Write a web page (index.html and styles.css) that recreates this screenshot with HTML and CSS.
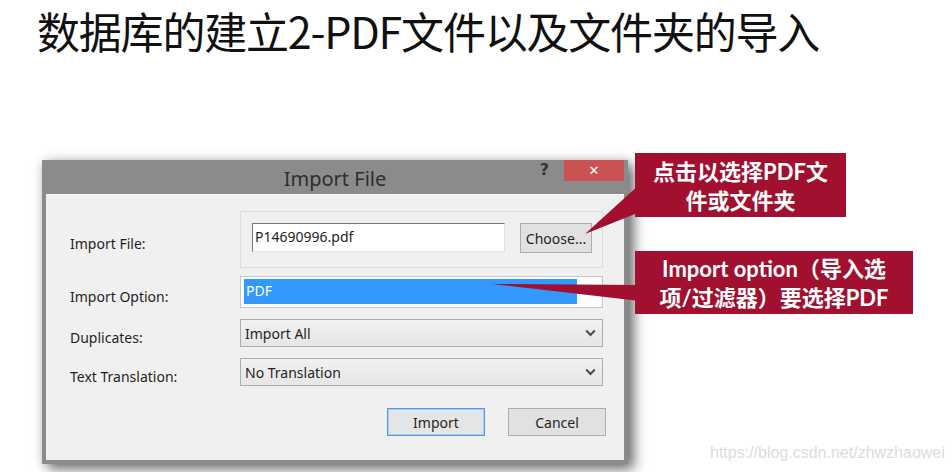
FILE: index.html
```html
<!DOCTYPE html>
<html lang="zh-CN">

<head>
    <meta charset="UTF-8">
    <title>数据库的建立2-PDF文件以及文件夹的导入</title>
    <link rel="stylesheet" href="styles.css">
</head>

<body>

    <h1 class="slide-title">数据库的建立2-PDF文件以及文件夹的导入</h1>

    <div class="stage">
        <div class="dialog">
            <div class="titlebar">
                <div class="dialog-title">Import File</div>
                <div class="window-buttons">
                    <span class="help">?</span>
                    <span class="close">&#x2715;</span>
                </div>
            </div>

            <div class="dialog-body">
                <div class="row row-file">
                    <div class="label">Import File:</div>
                    <div class="group-box">
                        <div class="text-field">P14690996.pdf</div>
                        <button class="btn btn-choose">Choose...</button>
                    </div>
                </div>

                <div class="row row-option">
                    <div class="label">Import Option:</div>
                    <div class="list-box">
                        <div class="list-item selected">PDF</div>
                    </div>
                </div>

                <div class="row row-select">
                    <div class="label">Duplicates:</div>
                    <div class="select">
                        <span>Import All</span>
                        <svg class="chevron" width="11" height="8" viewBox="0 0 11 8">
                            <path d="M1.2 1.5 L5.5 6 L9.8 1.5" fill="none" stroke="#4a4a4a" stroke-width="2"/>
                        </svg>
                    </div>
                </div>

                <div class="row row-select">
                    <div class="label">Text Translation:</div>
                    <div class="select">
                        <span>No Translation</span>
                        <svg class="chevron" width="11" height="8" viewBox="0 0 11 8">
                            <path d="M1.2 1.5 L5.5 6 L9.8 1.5" fill="none" stroke="#4a4a4a" stroke-width="2"/>
                        </svg>
                    </div>
                </div>

                <div class="actions">
                    <button class="btn btn-action default">Import</button>
                    <button class="btn btn-action">Cancel</button>
                </div>
            </div>
        </div>
    </div>

    <!-- callout pointers -->
    <svg class="pointers" width="952" height="472" viewBox="0 0 952 472">
        <polygon points="640,184 640,212 585,234" fill="#a1102f"/>
        <polygon points="492,284 640,285 640,301" fill="#a1102f"/>
    </svg>

    <div class="callout callout-choose">点击以选择PDF文<br>件或文件夹</div>
    <div class="callout callout-option">Import option（导入选<br>项/过滤器）要选择PDF</div>

    <div class="watermark">https://blog.csdn.net/zhwzhaowei</div>

</body>

</html>
```

FILE: styles.css
```css
body {
    margin: 0;
    background: #ffffff;
    position: relative;
    width: 952px;
    height: 472px;
    overflow: hidden;
    font-family: "Noto Sans", "Noto Sans CJK SC", sans-serif;
}

.slide-title {
    margin: 0;
    padding: 8px 0 0 37px;
    font-family: "Noto Sans CJK SC", sans-serif;
    font-weight: 400;
    font-size: 43px;
    line-height: 44px;
    letter-spacing: -1.2px;
    color: #111;
    white-space: nowrap;
}

.stage {
    padding: 108px 0 0 42px;
}

/* window */
.dialog {
    width: 578px;
    padding: 0 4px 4px 4px;
    background: #8b8b8b;
    box-shadow: 6px 5px 12px rgba(0, 0, 0, 0.55), 0 0 10px rgba(0, 0, 0, 0.12);
}

.titlebar {
    height: 34px;
    display: grid;
}

.dialog-title,
.window-buttons {
    grid-area: 1 / 1;
}

.dialog-title {
    justify-self: center;
    align-self: center;
    padding-top: 2px;
    font-size: 20px;
    color: #2e2e2e;
}

.window-buttons {
    justify-self: end;
    align-self: start;
    display: flex;
    align-items: flex-start;
}

.help {
    margin: 0 15px 0 0;
    font-family: "DejaVu Sans", sans-serif;
    font-weight: bold;
    font-size: 16px;
    color: #333;
}

.close {
    width: 60px;
    height: 21px;
    background: #c85352;
    color: #fff;
    font-family: "DejaVu Sans", sans-serif;
    font-weight: bold;
    font-size: 13px;
    line-height: 21px;
    text-align: center;
}

.dialog-body {
    height: 266px;
    box-sizing: border-box;
    padding: 16px 18px 0 24px;
    background: #f0f0f0;
    border-top: 1px solid #fafafa;
    font-size: 14px;
    color: #1f1f1f;
}

.row {
    display: flex;
    align-items: center;
}

.label {
    width: 170px;
    padding-top: 8px;
}

/* Import File row */
.group-box {
    width: 363px;
    height: 57px;
    box-sizing: border-box;
    border: 1px solid #dcdcdc;
    padding: 11px 0 0 11px;
    display: flex;
    align-items: flex-start;
}

.text-field {
    width: 253px;
    height: 29px;
    box-sizing: border-box;
    border: 1px solid #e2e2e2;
    border-top-color: #777;
    border-left-color: #777;
    background: #fff;
    padding: 3px 0 0 2px;
    line-height: 20px;
}

.btn {
    font-family: "Noto Sans", sans-serif;
    font-size: 14px;
    color: #1f1f1f;
    background: #e1e1e1;
    border: 1px solid #adadad;
    padding: 0;
}

.btn-choose {
    width: 72px;
    height: 30px;
    margin-left: 15px;
}

/* Import Option row */
.row-option {
    margin-top: 8px;
}

.list-box {
    width: 363px;
    height: 32px;
    box-sizing: border-box;
    border: 1px solid #c8c8c8;
    background: #fff;
    padding: 2px 25px 0 3px;
}

.list-item {
    height: 25px;
    line-height: 24px;
    padding-left: 2px;
}

.list-item.selected {
    background: #3399ff;
    color: #fff;
}

/* select rows */
.row-select {
    margin-top: 11px;
}

.select {
    width: 363px;
    height: 28px;
    box-sizing: border-box;
    border: 1px solid #adadad;
    background: linear-gradient(#f1f1f1, #e6e6e6);
    padding: 0 6px 0 4px;
    display: flex;
    align-items: center;
    justify-content: space-between;
}

/* buttons */
.actions {
    margin-top: 22px;
    display: flex;
    justify-content: flex-end;
    gap: 23px;
}

.btn-action {
    width: 98px;
    height: 28px;
}

.btn-action.default {
    border-color: #4f9be3;
    box-shadow: inset 0 0 0 1px #a8cdf3;
    background: #e5e5e5;
}

/* callouts over the screenshot */
.pointers {
    position: absolute;
    left: 0;
    top: 0;
    pointer-events: none;
}

.callout {
    position: absolute;
    background: #a1102f;
    color: #fff;
    font-family: Lato, "Noto Sans CJK SC", sans-serif;
    font-weight: bold;
    font-size: 22px;
    line-height: 29px;
    text-align: center;
    box-sizing: border-box;
    white-space: nowrap;
}

.callout-choose {
    left: 635px;
    top: 153px;
    width: 211px;
    height: 64px;
    padding-top: 4px;
}

.callout-option {
    left: 635px;
    top: 251px;
    width: 278px;
    height: 63px;
    padding-top: 3px;
}

.watermark {
    position: absolute;
    left: 710px;
    top: 444px;
    font-family: "Liberation Sans", sans-serif;
    font-size: 16px;
    color: #dcdcdc;
}
```
